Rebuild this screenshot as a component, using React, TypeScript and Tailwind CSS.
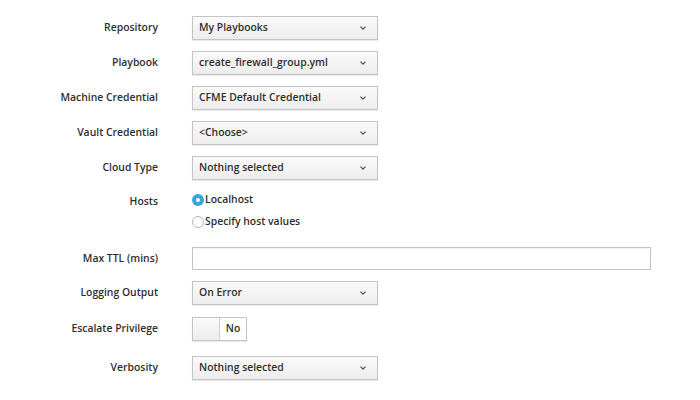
function Chevron() {
  return (
    <svg width="8" height="6" viewBox="0 0 8 6" className="text-[#4d5258]">
      <path d="M1.5 1.6 L4 4.1 L6.5 1.6" fill="none" stroke="currentColor" strokeWidth="1.3" />
    </svg>
  )
}

function Select({ value }: { value: string }) {
  return (
    <div className="flex h-[24px] w-[186px] items-center justify-between border border-[#c4c4c4] bg-gradient-to-b from-[#fafafa] to-[#ededed] pl-[6px] pr-[10px] shadow-[0_1px_1px_rgba(3,3,3,0.08)]">
      <span className="text-[10.4px] font-semibold text-[#2f2f2f]">{value}</span>
      <Chevron />
    </div>
  )
}

function Row({ label, children, className = "" }: { label: string; children: React.ReactNode; className?: string }) {
  return (
    <div className={`flex items-center ${className}`}>
      <div className="w-[159px] pr-[1px] text-right text-[10.4px] font-semibold text-[#2f2f2f]">{label}</div>
      <div className="ml-[33px] flex-1">{children}</div>
    </div>
  )
}

function Radio({ checked, label }: { checked?: boolean; label: string }) {
  return (
    <div className="flex h-[22px] items-center">
      {checked ? (
        <span className="flex h-[12px] w-[12px] items-center justify-center rounded-full bg-[#39a5dc]">
          <span className="h-[4px] w-[4px] rounded-full bg-white" />
        </span>
      ) : (
        <span className="h-[12px] w-[12px] rounded-full border border-[#b7b7b7] bg-white" />
      )}
      <span className="ml-[1px] text-[10.4px] font-semibold text-[#2f2f2f]">{label}</span>
    </div>
  )
}

export default function App() {
  return (
    <div className="h-[400px] w-[700px] bg-white pt-[16px] font-['Open_Sans',sans-serif]">
      <Row label="Repository">
        <Select value="My Playbooks" />
      </Row>
      <Row label="Playbook" className="mt-[11px]">
        <Select value="create_firewall_group.yml" />
      </Row>
      <Row label="Machine Credential" className="mt-[11px]">
        <Select value="CFME Default Credential" />
      </Row>
      <Row label="Vault Credential" className="mt-[11px]">
        <Select value="<Choose>" />
      </Row>
      <Row label="Cloud Type" className="mt-[11px]">
        <Select value="Nothing selected" />
      </Row>
      <div className="mt-[9px] flex">
        <div className="w-[159px] pr-[1px] pt-[5px] text-right text-[10.4px] font-semibold text-[#2f2f2f]">Hosts</div>
        <div className="ml-[33px] flex flex-col">
          <Radio checked label="Localhost" />
          <Radio label="Specify host values" />
        </div>
      </div>
      <Row label="Max TTL (mins)" className="mt-[14px]">
        <div className="h-[23px] w-[459px] border border-[#c4c4c4] bg-white shadow-[inset_0_1px_1px_rgba(3,3,3,0.05)]" />
      </Row>
      <Row label="Logging Output" className="mt-[11px]">
        <Select value="On Error" />
      </Row>
      <Row label="Escalate Privilege" className="mt-[12px]">
        <div className="flex h-[24px] w-[55px] border border-[#c4c4c4] shadow-[0_1px_1px_rgba(3,3,3,0.08)]">
          <div className="w-[27px] border-r border-[#d1d1d1] bg-gradient-to-b from-[#fafafa] to-[#ededed]" />
          <div className="flex flex-1 items-center justify-center bg-white text-[10.4px] font-semibold text-[#2f2f2f]">No</div>
        </div>
      </Row>
      <Row label="Verbosity" className="mt-[15px]">
        <Select value="Nothing selected" />
      </Row>
    </div>
  )
}
